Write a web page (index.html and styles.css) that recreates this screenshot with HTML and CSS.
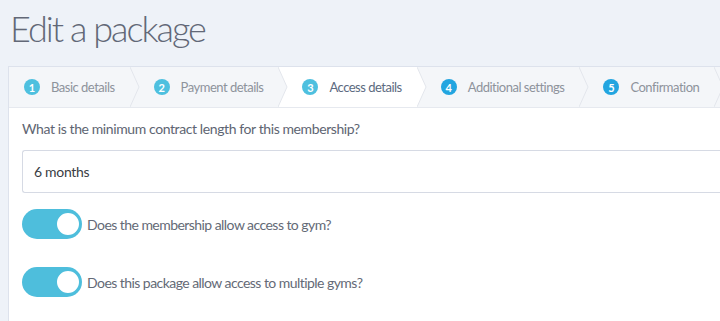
FILE: index.html
```html
<!DOCTYPE html>
<html>
<head>
<meta charset="utf-8">
<link rel="stylesheet" href="styles.css">
</head>
<body>
<h1 class="title">Edit a package</h1>
<div class="card">
  <div class="steps">
    <div class="step first"><span class="num">1</span><span class="label">Basic details</span>
      <svg class="chev" width="10" height="40" viewBox="0 0 10 40"><polygon points="0,0 9,20 0,40" class="fill-grey"/><polyline points="0,0 9,20 0,40" class="line"/></svg></div>
    <div class="step"><span class="num">2</span><span class="label">Payment details</span>
      <svg class="chev" width="10" height="40" viewBox="0 0 10 40"><polygon points="0,0 9,20 0,40" class="fill-grey"/><polyline points="0,0 9,20 0,40" class="line"/></svg></div>
    <div class="step active"><span class="num">3</span><span class="label">Access details</span>
      <svg class="chev" width="10" height="40" viewBox="0 0 10 40"><polygon points="0,0 9,20 0,40" class="fill-white"/><polyline points="0,0 9,20 0,40" class="line"/></svg></div>
    <div class="step todo"><span class="num">4</span><span class="label">Additional settings</span>
      <svg class="chev" width="10" height="40" viewBox="0 0 10 40"><polygon points="0,0 9,20 0,40" class="fill-grey"/><polyline points="0,0 9,20 0,40" class="line"/></svg></div>
    <div class="step todo"><span class="num">5</span><span class="label">Confirmation</span>
      <svg class="chev" width="10" height="40" viewBox="0 0 10 40"><polygon points="0,0 9,20 0,40" class="fill-grey"/><polyline points="0,0 9,20 0,40" class="line"/></svg></div>
  </div>
  <div class="body">
    <label class="question">What is the minimum contract length for this membership?</label>
    <div class="input">6 months</div>
    <div class="toggle-row"><span class="toggle"><span class="knob"></span></span><span class="toggle-label">Does the membership allow access to gym?</span></div>
    <div class="toggle-row"><span class="toggle"><span class="knob"></span></span><span class="toggle-label">Does this package allow access to multiple gyms?</span></div>
  </div>
</div>
</body>
</html>
```
FILE: styles.css
```css
html, body { margin: 0; padding: 0; }
body {
  background: #eef2f8;
  font-family: Lato, "Noto Sans", sans-serif;
  width: 720px;
  height: 321px;
  overflow: hidden;
}
.title {
  margin: 0;
  padding: 6px 0 0 10px;
  height: 60px;
  box-sizing: border-box;
  font-weight: 300;
  font-size: 36px;
  letter-spacing: -2px;
  color: #626877;
  line-height: 44px;
}
.card {
  margin-left: 8px;
  margin-top: 6px;
  background: #fff;
  border: 1px solid #dde2ec;
  border-right: none;
  border-bottom: none;
  height: 255px;
  box-sizing: border-box;
  overflow: hidden;
}
.steps {
  display: flex;
  height: 40px;
  background: #f4f6f9;
  border-bottom: 1px solid #e6e9ef;
  overflow: hidden;
}
.step {
  position: relative;
  display: flex;
  align-items: center;
  flex: none;
  padding: 0 16px 0 23px;
  font-size: 13px;
  letter-spacing: -0.5px;
  color: #8e939c;
  background: #f4f6f9;
  white-space: nowrap;
}
.step.first { padding-left: 15px; }
.step.active { background: #fff; color: #5c6a80; }
.num {
  width: 16px;
  height: 16px;
  border-radius: 50%;
  background: #4ec0df;
  color: #fff;
  font-size: 11px;
  font-weight: 700;
  letter-spacing: 0;
  display: flex;
  align-items: center;
  justify-content: center;
  margin-right: 11px;
}
.todo .num { background: #22a5e0; }
.chev {
  position: absolute;
  right: -9px;
  top: 0;
  z-index: 2;
}
.fill-grey { fill: #f4f6f9; }
.fill-white { fill: #fff; }
.line { fill: none; stroke: #e3e6ec; stroke-width: 1; }
.body { padding: 12px 0 0 13px; }
.question {
  display: block;
  font-size: 14px;
  letter-spacing: -0.4px;
  color: #5e6572;
  line-height: 18px;
}
.input {
  margin-top: 12px;
  height: 41px;
  border: 1px solid #d6dae4;
  border-right: none;
  border-radius: 3px 0 0 3px;
  padding-left: 11px;
  display: flex;
  align-items: center;
  font-size: 14px;
  letter-spacing: -0.3px;
  color: #3a3d44;
}
.toggle-row {
  display: flex;
  align-items: center;
  margin-top: 16px;
  height: 30px;
}
.toggle-row + .toggle-row { margin-top: 28px; }
.toggle {
  width: 60px;
  height: 30px;
  border-radius: 15px;
  background: #4ebedc;
  display: flex;
  justify-content: flex-end;
  align-items: center;
  box-sizing: border-box;
}
.knob {
  width: 26px;
  height: 26px;
  border-radius: 50%;
  background: #fff;
  border: 2px solid #4ebedc;
  box-sizing: border-box;
  margin-right: 1px;
}
.toggle-label {
  margin-left: 5px;
  font-size: 14px;
  letter-spacing: -0.55px;
  color: #646a76;
}
```
